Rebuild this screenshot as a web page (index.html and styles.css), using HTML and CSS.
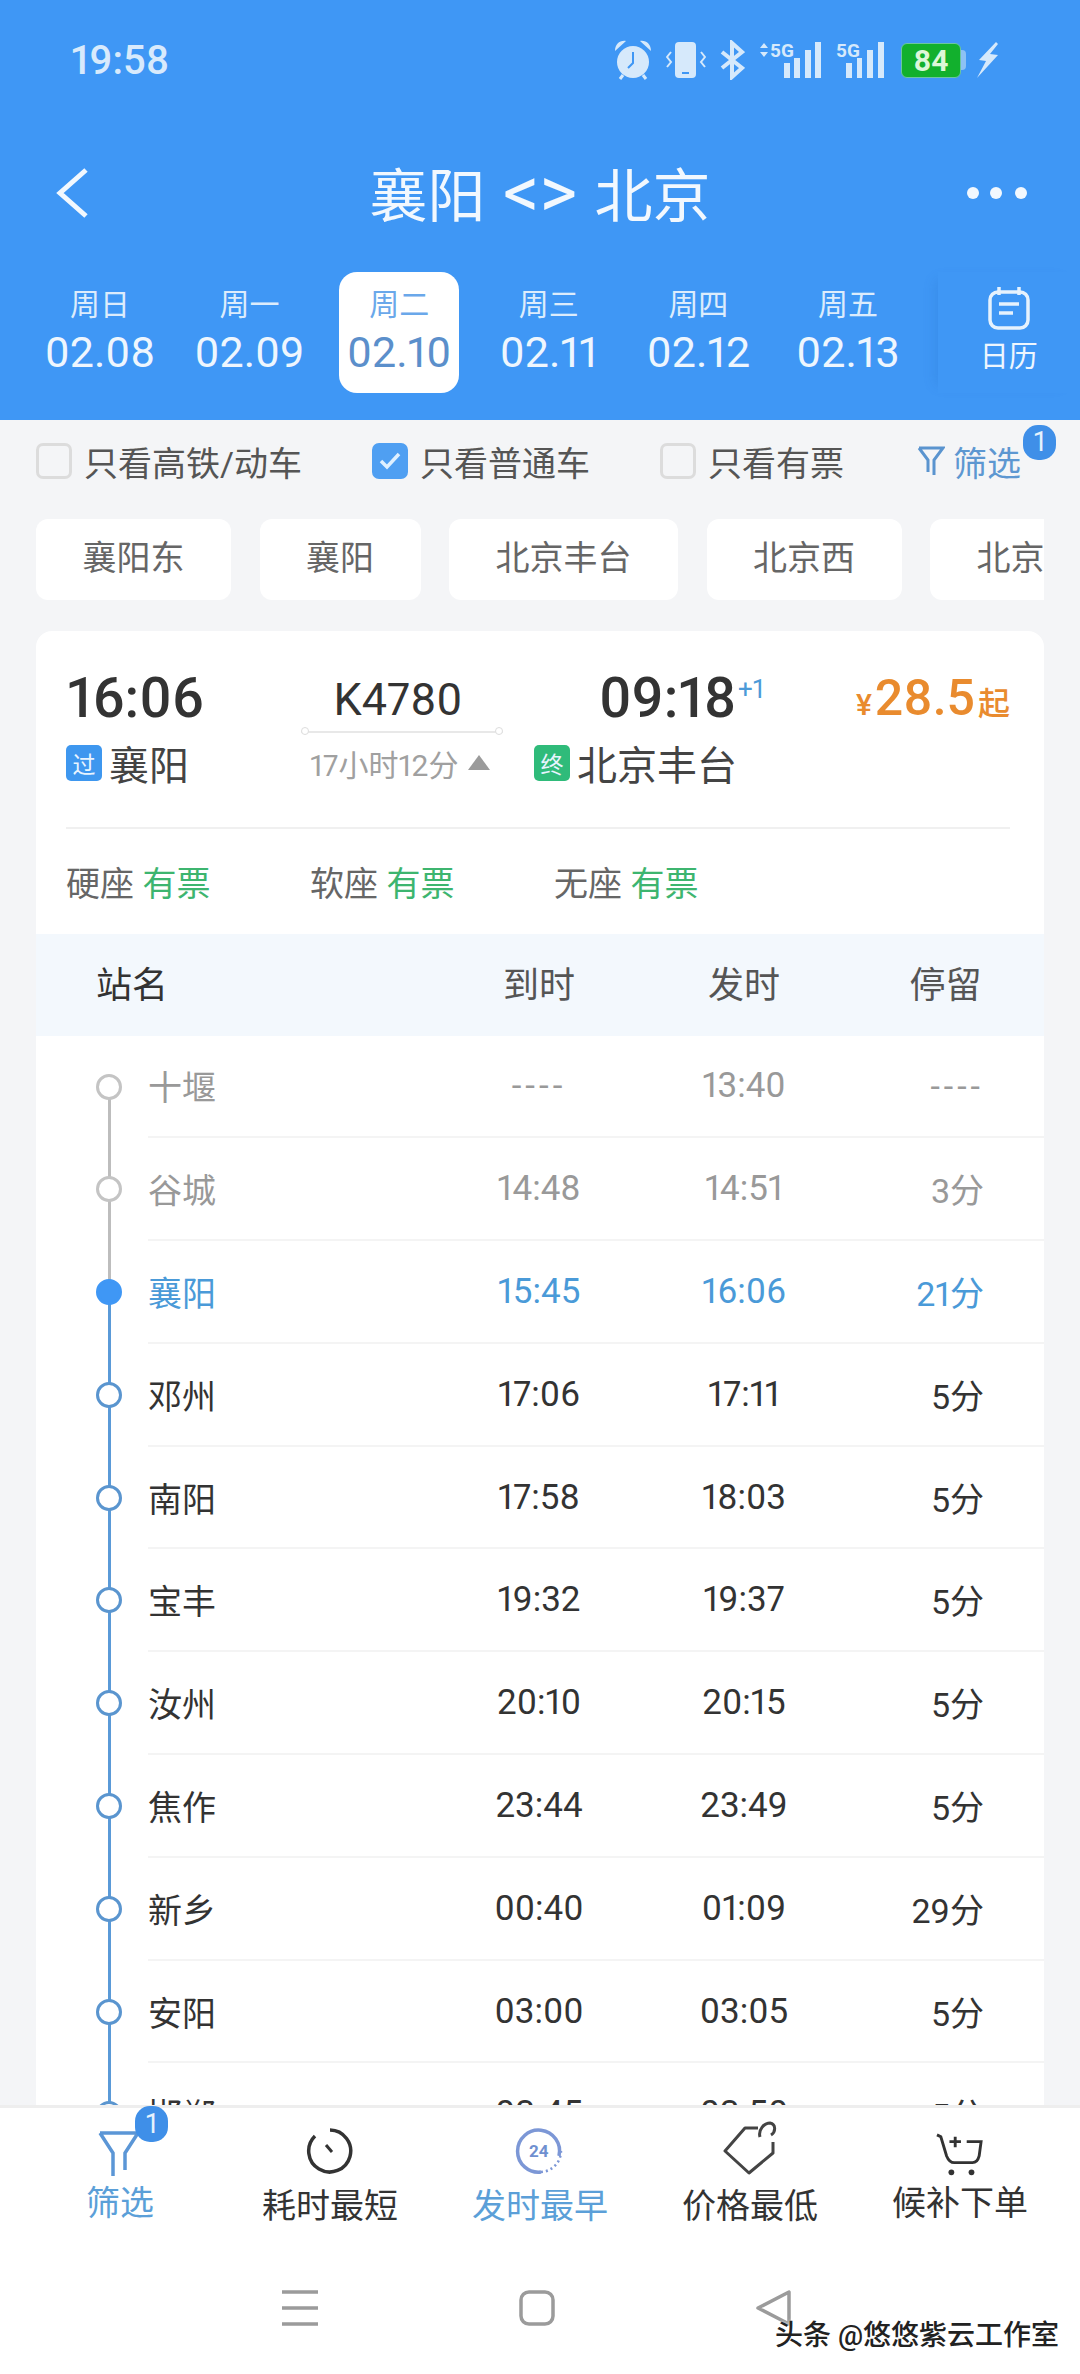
FILE: index.html
```html
<!DOCTYPE html>
<html lang="zh-CN">
<head>
<meta charset="utf-8">
<title>襄阳 北京</title>
<link rel="stylesheet" href="styles.css">
</head>
<body>
<div class="page">
  <header class="hero">
    <div class="status">
      <span class="clock">19:58</span>
      <div class="status-icons">
        <svg class="si" width="38" height="40" viewBox="0 0 38 40"><circle cx="19" cy="22" r="16" fill="#d6e9fb"/><path d="M19 12V23L14 28" fill="none" stroke="#3f97f5" stroke-width="2"/><path d="M1 11C1 4 6 0 12 1ZM37 11C37 4 32 0 26 1Z" fill="#d6e9fb"/><path d="M9 35L6 39M29 35L32 39" stroke="#d6e9fb" stroke-width="3"/></svg>
        <svg class="si" width="40" height="40" viewBox="0 0 40 40"><rect x="9" y="2" width="21" height="36" rx="4" fill="#d6e9fb"/><rect x="16" y="32" width="7" height="2" fill="#3f97f5"/><path d="M5 12L1 17L5 22L1 27M35 12L39 17L35 22L39 27" fill="none" stroke="#d6e9fb" stroke-width="2"/></svg>
        <svg class="si" width="25" height="40" viewBox="0 0 25 40"><path d="M2 12L22 28L12 37V3L22 12L2 28" fill="none" stroke="#d6e9fb" stroke-width="4"/></svg>
        <svg class="si" width="63" height="40" viewBox="0 0 63 40"><path d="M5 3L9 8H1ZM5 17L9 12H1Z" fill="#d6e9fb"/><text class="sig-text" x="11" y="17">5G</text><rect x="25" y="23" width="6" height="15" fill="#d6e9fb"/><rect x="35" y="18" width="6" height="20" fill="#d6e9fb"/><rect x="46" y="10" width="6" height="28" fill="#d6e9fb"/><rect x="56" y="2" width="6" height="36" fill="#d6e9fb"/></svg>
        <svg class="si" width="49" height="40" viewBox="0 0 49 40"><text class="sig-text" x="0" y="17">5G</text><rect x="10" y="23" width="6" height="15" fill="#d6e9fb"/><rect x="21" y="18" width="5" height="20" fill="#d6e9fb"/><rect x="31" y="10" width="6" height="28" fill="#d6e9fb"/><rect x="42" y="2" width="6" height="36" fill="#d6e9fb"/></svg>
        <div class="battery"><span class="battery-body">84</span><span class="battery-nub"></span></div>
        <svg class="si" width="25" height="40" viewBox="0 0 25 40"><path d="M21 2L4 20L11 21L2 38L23 15L15 14L23 4Z" fill="#d6e9fb"/></svg>
      </div>
    </div>
    <div class="titlebar">
      <svg class="back" width="36" height="52" viewBox="0 0 36 52"><path d="M32 3L6 26L32 49" fill="none" stroke="#f2f8fe" stroke-width="5"/></svg>
      <h1 class="title">襄阳 <span class="title-arrows">&lt;&gt;</span> 北京</h1>
      <svg class="more" width="62" height="14" viewBox="0 0 62 14"><circle cx="7" cy="7" r="6" fill="#f2f8fe"/><circle cx="30" cy="7" r="6" fill="#f2f8fe"/><circle cx="55" cy="7" r="6" fill="#f2f8fe"/></svg>
    </div>
    <nav class="dates">
      <div class="date"><span class="wk">周日</span><span class="dd">02.08</span></div>
      <div class="date"><span class="wk">周一</span><span class="dd">02.09</span></div>
      <div class="date date-on"><span class="wk">周二</span><span class="dd">02.10</span></div>
      <div class="date"><span class="wk">周三</span><span class="dd">02.11</span></div>
      <div class="date"><span class="wk">周四</span><span class="dd">02.12</span></div>
      <div class="date"><span class="wk">周五</span><span class="dd">02.13</span></div>
      <div class="cal">
        <svg width="44" height="44" viewBox="0 0 44 44"><rect x="3" y="6" width="38" height="36" rx="8" fill="none" stroke="#e6f2fd" stroke-width="3.5"/><path d="M12 1V9M32 1V9" stroke="#e6f2fd" stroke-width="3.5"/><path d="M12 18H32M12 27H26" stroke="#e6f2fd" stroke-width="3.5"/></svg>
        <span class="cal-label">日历</span>
      </div>
    </nav>
  </header>

  <main class="body">
    <div class="filters">
      <label class="check"><span class="box"></span>只看高铁/动车</label>
      <label class="check"><span class="box box-on"><svg width="24" height="20" viewBox="0 0 24 20"><path d="M3 10L9 16L21 3" fill="none" stroke="#dff0ff" stroke-width="3.5"/></svg></span>只看普通车</label>
      <label class="check"><span class="box"></span>只看有票</label>
      <div class="filter-link">
        <svg width="28" height="32" viewBox="0 0 28 32"><path d="M2 3H26L17 15V30M2 3L11 15V27" fill="none" stroke="#5a94cf" stroke-width="3"/></svg>
        <span>筛选</span>
        <span class="badge badge-top">1</span>
      </div>
    </div>
    <div class="chips">
      <span class="chip">襄阳东</span>
      <span class="chip">襄阳</span>
      <span class="chip">北京丰台</span>
      <span class="chip">北京西</span>
      <span class="chip">北京</span>
    </div>

    <section class="card">
      <div class="train">
        <div class="train-a">
          <span class="t-dep">16:06</span>
          <div class="t-no"><span>K4780</span></div>
          <span class="t-arr">09:18<sup class="plus">+1</sup></span>
          <span class="price"><small class="yen">¥</small>28.5<small class="qi">起</small></span>
        </div>
        <div class="train-b">
          <div class="st st-from"><span class="tag tag-blue">过</span>襄阳</div>
          <div class="dur">17小时12分<i class="tri"></i></div>
          <div class="st"><span class="tag tag-green">终</span>北京丰台</div>
        </div>
      </div>
      <div class="seats">
        <span class="seat">硬座 <em>有票</em></span>
        <span class="seat">软座 <em>有票</em></span>
        <span class="seat">无座 <em>有票</em></span>
      </div>
      <div class="thead">
        <span class="th-name">站名</span><span>到时</span><span>发时</span><span>停留</span>
      </div>
      <div class="stops">
        <div class="stop past"><span class="dot"></span><div class="cells"><span class="nm">十堰</span><span class="dash">----</span><span>13:40</span><span class="sl dash">----</span></div></div>
        <div class="stop past"><span class="dot"></span><div class="cells"><span class="nm">谷城</span><span>14:48</span><span>14:51</span><span class="sl">3分</span></div></div>
        <div class="stop now"><span class="dot"></span><div class="cells"><span class="nm">襄阳</span><span>15:45</span><span>16:06</span><span class="sl">21分</span></div></div>
        <div class="stop"><span class="dot"></span><div class="cells"><span class="nm">邓州</span><span>17:06</span><span>17:11</span><span class="sl">5分</span></div></div>
        <div class="stop"><span class="dot"></span><div class="cells"><span class="nm">南阳</span><span>17:58</span><span>18:03</span><span class="sl">5分</span></div></div>
        <div class="stop"><span class="dot"></span><div class="cells"><span class="nm">宝丰</span><span>19:32</span><span>19:37</span><span class="sl">5分</span></div></div>
        <div class="stop"><span class="dot"></span><div class="cells"><span class="nm">汝州</span><span>20:10</span><span>20:15</span><span class="sl">5分</span></div></div>
        <div class="stop"><span class="dot"></span><div class="cells"><span class="nm">焦作</span><span>23:44</span><span>23:49</span><span class="sl">5分</span></div></div>
        <div class="stop"><span class="dot"></span><div class="cells"><span class="nm">新乡</span><span>00:40</span><span>01:09</span><span class="sl">29分</span></div></div>
        <div class="stop"><span class="dot"></span><div class="cells"><span class="nm">安阳</span><span>03:00</span><span>03:05</span><span class="sl">5分</span></div></div>
        <div class="stop"><span class="dot"></span><div class="cells"><span class="nm">邯郸</span><span>03:45</span><span>03:50</span><span class="sl">5分</span></div></div>
      </div>
    </section>
  </main>

  <footer class="foot">
    <div class="tabs">
      <div class="tab tab-blue tab-hi">
        <svg width="44" height="50" viewBox="0 0 44 50"><path d="M2 5H40L27 25V42M2 5L15 25V48" fill="none" stroke="#5b96d6" stroke-width="3.5"/></svg>
        <span class="tab-label">筛选</span>
        <span class="badge badge-nav">1</span>
      </div>
      <div class="tab tab-up">
        <svg width="48" height="50" viewBox="0 0 48 50"><path d="M24 4A21 21 0 1 1 9 10" fill="none" stroke="#333" stroke-width="3.5"/><path d="M20 19L26 26" stroke="#333" stroke-width="3"/></svg>
        <span class="tab-label">耗时最短</span>
      </div>
      <div class="tab tab-blue tab-up">
        <svg width="50" height="50" viewBox="0 0 50 50"><path d="M44 30A21 21 0 1 0 26 46" fill="none" stroke="#7c97d6" stroke-width="3.5"/><path d="M26 46A21 21 0 0 0 46 25" fill="none" stroke="#7c97d6" stroke-width="2.5" stroke-dasharray="2 3"/><text class="tf" x="14" y="31">24</text></svg>
        <span class="tab-label">发时最早</span>
      </div>
      <div class="tab tab-up">
        <svg width="56" height="56" viewBox="0 0 56 56"><path d="M36 8H23L3 31L27 53L51 33V22" fill="none" stroke="#444" stroke-width="3" stroke-linejoin="round"/><path d="M38 17C36 10 42 3 48 3C54 4 54 12 49 15" fill="none" stroke="#444" stroke-width="3"/></svg>
        <span class="tab-label">价格最低</span>
      </div>
      <div class="tab tab-hi">
        <svg width="52" height="46" viewBox="0 0 52 48"><path d="M2 3L6 5L12 25C14 30 16 32 20 32H39C43 32 45 29 46 25L48 10H33" fill="none" stroke="#333" stroke-width="3"/><path d="M21 5V16M15 10H27" stroke="#333" stroke-width="3"/><circle cx="17" cy="42" r="3" fill="#333"/><circle cx="38" cy="42" r="3" fill="#333"/></svg>
        <span class="tab-label">候补下单</span>
      </div>
    </div>
    <div class="sysnav">
      <svg width="36" height="36" viewBox="0 0 36 36"><path d="M0 2H36M0 18H36M0 34H36" stroke="#9b9b9b" stroke-width="3.5"/></svg>
      <svg width="36" height="36" viewBox="0 0 36 36"><rect x="2" y="2" width="32" height="32" rx="8" fill="none" stroke="#9b9b9b" stroke-width="3.5"/></svg>
      <svg width="36" height="36" viewBox="0 0 36 36"><path d="M33 2V34L2 18Z" fill="none" stroke="#9b9b9b" stroke-width="3.5" stroke-linejoin="round"/></svg>
    </div>
    <span class="mark">头条 @悠悠紫云工作室</span>
  </footer>
</div>
</body>
</html>
```
FILE: styles.css
```css
* { box-sizing: border-box; }
html, body { margin: 0; padding: 0; }
body {
  width: 1080px;
  height: 2374px;
  overflow: hidden;
  font-family: Roboto, "Noto Sans CJK SC", sans-serif;
  font-variant-numeric: proportional-nums;
  color: #333;
  background: #f4f5f7;
}
.page { display: flex; flex-direction: column; height: 2374px; }

/* header */
.hero { height: 420px; flex: none; background: #3f97f5; color: #f2f8fe; }
.status { height: 120px; display: flex; align-items: center; justify-content: space-between; padding: 0 80px 0 71px; }
.clock { font-size: 40px; font-weight: 500; color: #d8eafc; }
.status-icons { display: flex; align-items: center; gap: 14px; }
.si { display: block; flex: none; }
.sig-text { font: 700 19px "Liberation Sans Narrow", Roboto, sans-serif; fill: #d6e9fb; }
.battery { display: flex; align-items: center; margin: 0 -5px 0 2px; }
.battery-body { width: 60px; height: 35px; background: #12b02d; border: 1px solid #6bc6a0; border-radius: 6px; color: #dcf7d9; font-size: 30px; font-weight: 700; line-height: 33px; text-align: center; }
.battery-nub { width: 5px; height: 20px; background: #8dc1f4; border-radius: 0 4px 4px 0; }
.titlebar { height: 146px; margin-bottom: 6px; display: grid; grid-template-columns: 1fr auto 1fr; align-items: center; }
.back { margin-left: 54px; }
.title { margin: 4px 0 0; font-size: 58px; font-weight: 400; word-spacing: 3px; line-height: 1; white-space: nowrap; }
.title-arrows { font-size: 72px; line-height: 58px; }
.more { justify-self: end; margin-right: 52px; }
.dates { display: flex; padding-left: 40px; gap: 29.6px; height: 121px; }
.date { width: 120px; flex: none; padding-top: 12px; display: flex; flex-direction: column; align-items: center; border-radius: 18px; }
.wk { font-size: 30px; line-height: 42px; color: #dcecfc; }
.dd { font-size: 43px; line-height: 52px; color: #eef6fe; white-space: nowrap; }
.date-on { background: #fff; }
.date-on .wk { color: #6aa8ea; }
.date-on .dd { color: #5b8fcb; }
.cal { width: 154px; margin-left: auto; padding-top: 14px; display: flex; flex-direction: column; align-items: center; box-shadow: -10px 0 12px -8px rgba(30, 100, 190, .2); }
.cal svg { display: block; }
.cal-label { font-size: 29px; line-height: 40px; margin-top: 7px; color: #eef6fe; }

/* body */
.body { flex: 1; min-height: 0; overflow: hidden; padding: 0 36px; }
.filters { height: 82px; display: flex; align-items: center; gap: 70px; color: #555; font-size: 34px; }
.check { display: flex; align-items: center; gap: 12px; white-space: nowrap; }
.box { width: 36px; height: 36px; border: 3px solid #dcdcdc; border-radius: 7px; display: flex; align-items: center; justify-content: center; flex: none; }
.box-on { background: #4f9ff2; border-color: #4f9ff2; }
.filter-link { position: relative; margin-left: 3px; display: flex; align-items: center; gap: 8px; color: #5d97d1; }
.filter-link svg { display: block; }
.badge { position: absolute; display: flex; align-items: center; justify-content: center; width: 33px; height: 35px; border-radius: 15px; background: #3f8fe8; color: #e6f2fd; font-size: 27px; }
.badge-top { left: 106px; top: -12px; }
.chips { display: flex; gap: 28.5px; margin-top: 17px; height: 81px; overflow: hidden; }
.chip { flex: none; height: 81px; padding: 0 46.5px; background: #fff; border-radius: 12px; font-size: 34px; line-height: 78px; color: #666; }
.card { margin-top: 31px; background: #fff; border-radius: 16px 16px 0 0; }
.train { padding: 30px 34px 0 30px; height: 196px; }
.train-a { display: flex; align-items: center; height: 72px; }
.t-dep { width: 235px; padding-left: 1px; font-size: 55.5px; font-weight: 500; color: #333; line-height: 76px; height: 72px; }
.t-no { position: relative; width: 202px; height: 72px; border-bottom: 2px solid #e8e8e8; text-align: center; font-size: 45px; line-height: 78px; color: #333; padding-right: 8px; }
.t-no::before, .t-no::after { content: ""; position: absolute; bottom: -4px; width: 6px; height: 6px; border: 1px solid #ddd; border-radius: 50%; background: #fff; }
.t-no::before { left: 0; }
.t-no::after { right: 0; }
.t-arr { position: relative; margin-left: 96px; font-size: 55.5px; font-weight: 500; line-height: 76px; height: 72px; }
.plus { position: absolute; left: 139px; top: 10px; font-size: 26px; font-weight: 400; color: #4c9ad8; line-height: 1.4; }
.price { margin-left: auto; font-size: 50px; font-weight: 500; color: #e98b2e; line-height: 74px; height: 72px; white-space: nowrap; }
.yen { font-size: 30px; margin-right: 3px; }
.qi { font-size: 32px; margin-left: 3px; }
.train-b { display: flex; align-items: center; height: 37px; margin-top: 11px; }
.st { display: flex; align-items: center; gap: 7px; font-size: 40px; color: #444; white-space: nowrap; }
.st-from { width: 235px; }
.tag { width: 36px; height: 36px; border-radius: 5px; display: flex; align-items: center; justify-content: center; font-size: 23px; color: #e8f4ff; flex: none; }
.tag-blue { background: #3e97ef; }
.tag-green { background: #2fbb7a; }
.dur { width: 233px; padding-left: 9px; display: flex; align-items: center; gap: 10px; font-size: 30px; color: #a0a0a0; white-space: nowrap; }
.tri { width: 0; height: 0; border-left: 11px solid transparent; border-right: 11px solid transparent; border-bottom: 15px solid #9b9b9b; }
.seats { margin: 0 34px 0 30px; height: 107px; border-top: 2px solid #f0f0f0; display: flex; align-items: center; font-size: 34px; color: #666; }
.seat { width: 244px; flex: none; }
.seat em { font-style: normal; color: #3db56f; }
.thead { height: 101.5px; padding-bottom: 5px; background: #f3f8fd; display: grid; grid-template-columns: 401px 204px 206px 197px; align-items: center; text-align: center; font-size: 36px; color: #555; }
.thead .th-name { text-align: left; padding-left: 60px; color: #333; }
.stop { position: relative; height: 102.8px; display: flex; font-size: 35px; }
.stop::before { content: ""; position: absolute; left: 72px; top: 50%; width: 3px; height: 100%; background: #5a9ad8; }
.stop.past::before { background: #bdbdbd; }
.dot { position: relative; z-index: 1; flex: none; width: 26px; height: 26px; margin: 38px 26px 0 60px; border: 3px solid #5a95cf; border-radius: 50%; background: #fff; }
.past .dot { border-color: #c4c4c4; }
.now .dot { background: #3f97f5; border-color: #3f97f5; }
.cells { flex: 1; display: grid; grid-template-columns: 289px 204px 206px 1fr; align-items: center; text-align: center; border-bottom: 2px solid #f4f4f4; color: #333; }
.cells .nm { text-align: left; font-size: 34px; }
.cells .sl { text-align: right; padding-right: 60px; font-size: 34px; }
.dash { letter-spacing: 4px; }
.past .cells { color: #999; }
.now .cells { color: #4a9ad8; }

/* footer */
.foot { position: relative; height: 269px; flex: none; background: #fff; border-top: 3px solid #eeeeee; }
.tabs { display: grid; grid-template-columns: repeat(5, 210px); padding: 12px 15px 0; height: 122px; }
.tab { position: relative; display: flex; flex-direction: column; align-items: center; justify-content: flex-end; color: #333; }
.tab svg { display: block; }
.tab-label { font-size: 34px; line-height: 50px; white-space: nowrap; }
.tab-blue { color: #5b9fd8; }
.tab-hi .tab-label { margin-bottom: 3px; }
.tab-up svg { margin-bottom: 5px; }
.tf { font: 700 17px Roboto, sans-serif; fill: #6f90d0; }
.badge-nav { left: 120px; top: -14px; height: 36px; }
.sysnav { display: flex; gap: 201px; padding-left: 282px; margin-top: 60px; }
.sysnav svg { display: block; }
.mark { position: absolute; left: 775px; top: 210px; font-size: 28px; font-weight: 500; line-height: 36px; color: #222; white-space: nowrap; text-shadow: 0 0 3px #fff; }
```
